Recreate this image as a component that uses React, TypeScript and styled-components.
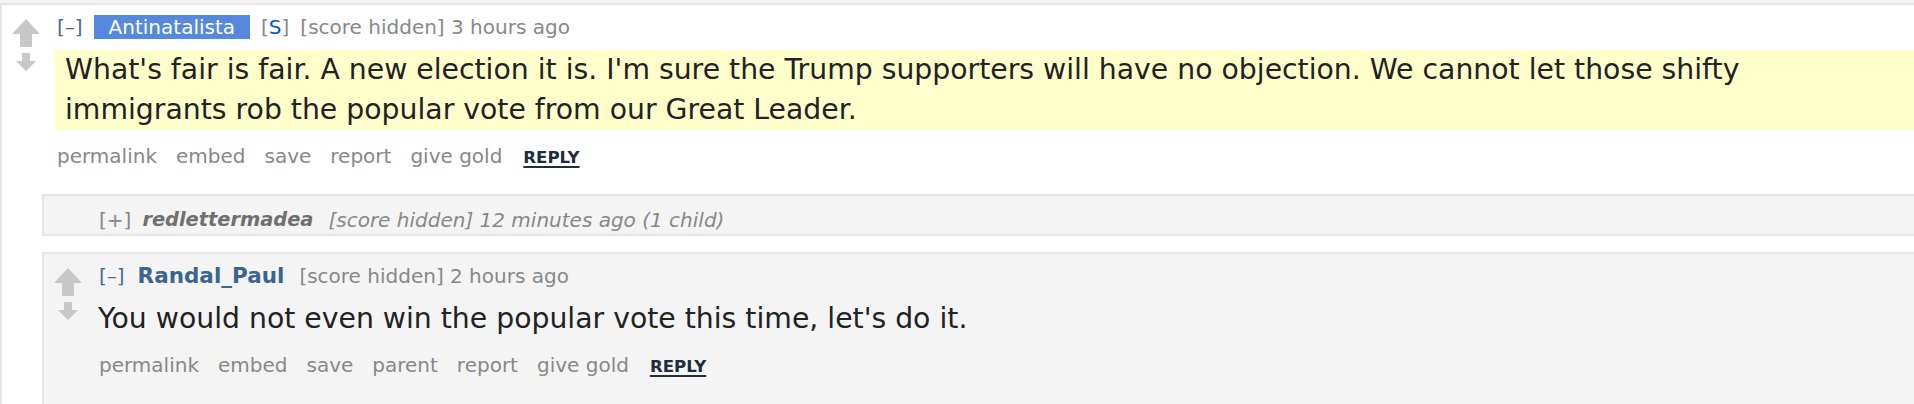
import React from "react";
import styled, { createGlobalStyle } from "styled-components";

const GlobalStyle = createGlobalStyle`
  html, body { margin: 0; padding: 0; background: #ffffff; }
  #root { width: 1914px; height: 404px; overflow: hidden; }
`;

const Page = styled.div`
  box-sizing: border-box;
  height: 404px;
  overflow: hidden;
  background: #f4f4f4;
  padding-top: 3px;
  font-family: "DejaVu Sans", Verdana, sans-serif;
`;

const Comment = styled.div<{ $even?: boolean }>`
  background: ${(p) => (p.$even ? "#f4f4f4" : "#ffffff")};
  border-top: 2px solid #e6e6e6;
  border-left: 2px solid #e6e6e6;
  display: flex;
  flex-direction: column;
`;

const CommentRow = styled.div`
  display: flex;
  align-items: flex-start;
`;

const Midcol = styled.div`
  flex: none;
  width: 48px;
  padding-top: 14px;
  display: flex;
  flex-direction: column;
  align-items: center;
  gap: 6px;
`;

const Entry = styled.div`
  flex: 1;
  min-width: 0;
  margin-left: 7px;
`;

const Tagline = styled.div`
  display: flex;
  align-items: center;
  gap: 11px;
  margin-top: 10px;
  height: 24px;
  font-size: 20px;
  line-height: 24px;
  color: #888888;
  white-space: nowrap;
`;

const Expand = styled.span<{ $muted?: boolean }>`
  color: ${(p) => (p.$muted ? "#888888" : "#4a6c96")};
  font-style: normal;
`;

const Flair = styled.span`
  background: #5589de;
  color: #ffffff;
  padding: 0 15px;
  line-height: 24px;
`;

const Submitter = styled.span`
  color: #888888;
  & b {
    font-weight: normal;
    color: #0055df;
  }
`;

const Author = styled.span`
  color: #3b6493;
  font-weight: bold;
  font-size: 21.5px;
  margin: 0 4px 0 2px;
`;

const Body = styled.div<{ $highlight?: boolean }>`
  margin-top: 11px;
  background: ${(p) => (p.$highlight ? "#ffffcc" : "transparent")};
  margin-left: ${(p) => (p.$highlight ? "-3px" : "-1px")};
  padding-left: ${(p) => (p.$highlight ? "11px" : "0")};
`;

const Paragraph = styled.p`
  margin: 0;
  max-width: 1800px;
  font-size: 28.3px;
  line-height: 40px;
  color: #222222;
`;

const Buttons = styled.ul`
  list-style: none;
  margin: 14px 0 0;
  padding: 0;
  display: flex;
  align-items: baseline;
  gap: 19px;
  font-size: 20px;
  line-height: 24px;
  color: #888888;
`;

const ButtonItem = styled.li`
  white-space: nowrap;
`;

const ReplyLink = styled.li`
  margin-left: 2px;
  font-size: 16.6px;
  font-weight: bold;
  text-transform: uppercase;
  text-decoration: underline;
  text-decoration-thickness: 2px;
  text-underline-offset: 3px;
  color: #1f2d3c;
`;

const ChildList = styled.div<{ $top: number }>`
  margin-left: 40px;
  margin-top: ${(p) => p.$top}px;
  display: flex;
  flex-direction: column;
  gap: 16px;
`;

const Collapsed = styled.div`
  background: #f4f4f4;
  border-top: 2px solid #e6e6e6;
  border-bottom: 2px solid #e6e6e6;
  border-left: 2px solid #e6e6e6;
  padding: 12px 0 2px 55px;
  display: flex;
  align-items: center;
  gap: 11px;
  font-size: 20px;
  line-height: 24px;
  color: #888888;
  font-style: italic;
  white-space: nowrap;
`;

const CollapsedAuthor = styled.span`
  font-weight: bold;
  font-size: 19.4px;
  color: #707070;
  margin-right: 4px;
`;

const Stub = styled.div`
  background: #ffffff;
  border-top: 2px solid #e6e6e6;
  border-left: 2px solid #e6e6e6;
  min-height: 60px;
`;

const ArrowSvg = styled.svg`
  display: block;
  flex: none;
`;

function UpArrow() {
  return (
    <ArrowSvg width="28" height="28" viewBox="0 0 28 28" aria-hidden="true">
      <path d="M14 0 L28 15 L20 15 L20 28 L8 28 L8 15 L0 15 Z" fill="#c8c8c8" />
    </ArrowSvg>
  );
}

function DownArrow() {
  return (
    <ArrowSvg width="20" height="18" viewBox="0 0 20 18" aria-hidden="true">
      <path d="M6 0 L14 0 L14 8 L20 8 L10 18 L0 8 L6 8 Z" fill="#c8c8c8" />
    </ArrowSvg>
  );
}

function Votes() {
  return (
    <Midcol>
      <UpArrow />
      <DownArrow />
    </Midcol>
  );
}

function ActionList({ items }: { items: string[] }) {
  return (
    <Buttons>
      {items.map((it) => (
        <ButtonItem key={it}>{it}</ButtonItem>
      ))}
      <ReplyLink>reply</ReplyLink>
    </Buttons>
  );
}

export default function App() {
  return (
    <>
      <GlobalStyle />
      <Page>
        <Comment>
          <CommentRow>
            <Votes />
            <Entry>
              <Tagline>
                <Expand>[–]</Expand>
                <Flair>Antinatalista</Flair>
                <Submitter>
                  [<b>S</b>]
                </Submitter>
                <span>[score hidden] 3 hours ago</span>
              </Tagline>
              <Body $highlight>
                <Paragraph>
                  What's fair is fair. A new election it is. I'm sure the Trump supporters will have no
                  objection. We cannot let those shifty immigrants rob the popular vote from our Great
                  Leader.
                </Paragraph>
              </Body>
              <ActionList items={["permalink", "embed", "save", "report", "give gold"]} />
            </Entry>
          </CommentRow>
          <ChildList $top={24}>
            <Collapsed>
              <Expand $muted>[+]</Expand>
              <CollapsedAuthor>redlettermadea</CollapsedAuthor>
              <span>[score hidden] 12 minutes ago (1 child)</span>
            </Collapsed>
            <Comment $even>
              <CommentRow>
                <Votes />
                <Entry>
                  <Tagline>
                    <Expand>[–]</Expand>
                    <Author>Randal_Paul</Author>
                    <span>[score hidden] 2 hours ago</span>
                  </Tagline>
                  <Body>
                    <Paragraph>You would not even win the popular vote this time, let's do it.</Paragraph>
                  </Body>
                  <ActionList items={["permalink", "embed", "save", "parent", "report", "give gold"]} />
                </Entry>
              </CommentRow>
              <ChildList $top={25}>
                <Stub />
              </ChildList>
            </Comment>
          </ChildList>
        </Comment>
      </Page>
    </>
  );
}
